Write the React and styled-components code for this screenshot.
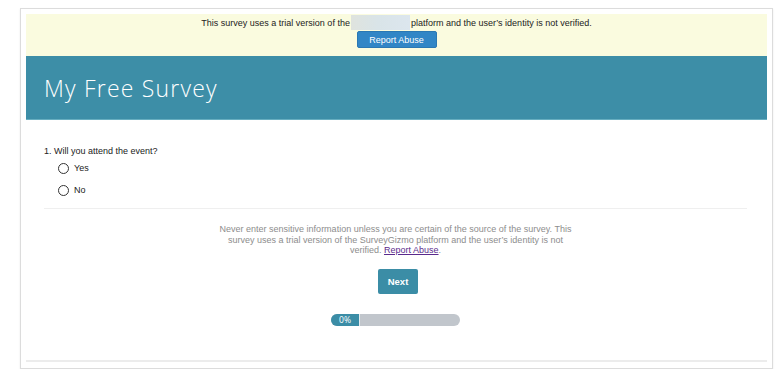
import React from 'react';
import styled, { createGlobalStyle } from 'styled-components';

const GlobalStyle = createGlobalStyle`
  body {
    margin: 0;
    background: #fff;
    font-family: "Liberation Sans", Arial, sans-serif;
  }
`;

const Frame = styled.div`
  box-sizing: border-box;
  margin: 8px 0 0 20px;
  width: 753px;
  height: 361px;
  padding: 5px 5px 6px;
  border: 1px solid #dcdcdc;
  box-shadow: 0 1px 2px rgba(0, 0, 0, 0.08);
  display: flex;
  flex-direction: column;
`;

const Card = styled.div`
  flex: 1;
  display: flex;
  flex-direction: column;
  border-bottom: 2px solid #ececec;
`;

const Banner = styled.div`
  background: #fafbdf;
  height: 42px;
  display: flex;
  flex-direction: column;
  align-items: center;
  padding-top: 1.5px;
  box-sizing: border-box;
  font-size: 9px;
  color: #222;
`;

const BannerText = styled.div`
  display: flex;
  align-items: center;
  height: 14px;
`;

const Redacted = styled.span`
  display: inline-block;
  width: 59px;
  height: 15px;
  margin: 0 1px;
  background: linear-gradient(90deg, #dfe3de 0%, #d9e4e8 45%, #dce6ee 100%);
  filter: blur(0.6px);
`;

const AbuseButton = styled.button`
  margin-top: 1.5px;
  width: 80px;
  height: 17px;
  border: 1px solid #2a78b3;
  border-radius: 2px;
  background: #3186c6;
  color: #fff;
  font-family: inherit;
  font-size: 9px;
  padding: 0;
`;

const Header = styled.div`
  background: #3d8ea7;
  height: 64px;
  display: flex;
  align-items: center;
  padding-left: 18px;
  border-bottom: 1px solid #67aec0;
  box-sizing: border-box;
`;

const Title = styled.h1`
  margin: 0;
  font-family: "Open Sans", sans-serif;
  font-weight: 300;
  font-size: 23px;
  color: #fff;
  letter-spacing: 1.2px;
`;

const Body = styled.div`
  padding: 26px 20px 0 18px;
  display: flex;
  flex-direction: column;
`;

const Question = styled.div`
  font-size: 9px;
  color: #222;
  margin-bottom: 6px;
`;

const Options = styled.div`
  display: flex;
  flex-direction: column;
  gap: 10px;
  padding-left: 14px;
`;

const Option = styled.label`
  display: flex;
  align-items: center;
  gap: 5px;
  font-size: 9px;
  color: #222;
  height: 12px;
`;

const Radio = styled.span`
  display: inline-block;
  box-sizing: border-box;
  width: 11px;
  height: 11px;
  border: 1.3px solid #333;
  border-radius: 50%;
`;

const Divider = styled.hr`
  margin: 12px 0 0;
  border: 0;
  border-top: 1px solid #efefef;
`;

const Footer = styled.div`
  display: flex;
  flex-direction: column;
  align-items: center;
  padding-top: 15px;
`;

const Notice = styled.p`
  margin: 0;
  width: 362px;
  text-align: center;
  font-size: 9px;
  line-height: 10.5px;
  color: #8d8d8d;

  a {
    color: #5a2a8c;
    text-decoration: underline;
  }
`;

const NextButton = styled.button`
  margin: 13px 0 0 5px;
  width: 40px;
  height: 25px;
  border: 0;
  border-radius: 2px;
  background: #3b8da6;
  color: #fff;
  font-family: inherit;
  font-weight: bold;
  font-size: 9.5px;
  padding: 0;
`;

const Progress = styled.div`
  margin-top: 20px;
  width: 129px;
  height: 12px;
  border-radius: 6px;
  background: #c1c6cc;
  overflow: hidden;
  display: flex;
`;

const ProgressFill = styled.div`
  width: 28px;
  background: #3b8da6;
  color: #fff;
  font-family: "Open Sans", sans-serif;
  font-size: 8.5px;
  line-height: 12px;
  text-align: center;
  border-right: 1px solid #e6ecef;
`;

export default function App() {
  return (
    <>
      <GlobalStyle />
      <Frame>
        <Card>
          <Banner>
            <BannerText>
              This survey uses a trial version of the
              <Redacted />
              platform and the user’s identity is not verified.
            </BannerText>
            <AbuseButton>Report Abuse</AbuseButton>
          </Banner>
          <Header>
            <Title>My Free Survey</Title>
          </Header>
          <Body>
            <Question>1. Will you attend the event?</Question>
            <Options>
              <Option><Radio />Yes</Option>
              <Option><Radio />No</Option>
            </Options>
            <Divider />
            <Footer>
              <Notice>
                Never enter sensitive information unless you are certain of the source of the survey. This
                survey uses a trial version of the SurveyGizmo platform and the user’s identity is not
                verified. <a href="#">Report Abuse</a>.
              </Notice>
              <NextButton>Next</NextButton>
              <Progress>
                <ProgressFill>0%</ProgressFill>
              </Progress>
            </Footer>
          </Body>
        </Card>
      </Frame>
    </>
  );
}
